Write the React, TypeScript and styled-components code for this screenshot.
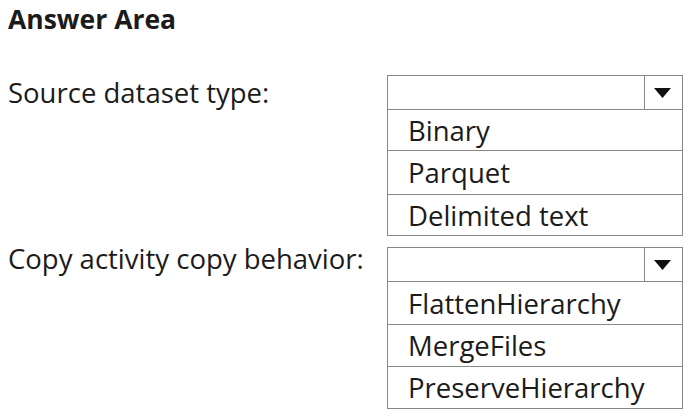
import React from "react";
import styled, { createGlobalStyle } from "styled-components";

const Global = createGlobalStyle`
  html, body {
    margin: 0;
    padding: 0;
    background: #ffffff;
  }
  body {
    font-family: "Open Sans", "Noto Sans", "Liberation Sans", sans-serif;
    color: #1b1b1b;
  }
`;

const Page = styled.div`
  width: 700px;
  height: 419px;
  box-sizing: border-box;
  padding: 3px 0 0 8px;
  overflow: hidden;
`;

const Title = styled.h1`
  margin: 0;
  font-size: 26.5px;
  font-weight: 700;
  line-height: 32px;
  letter-spacing: 0;
`;

const Form = styled.div`
  display: grid;
  grid-template-columns: 379px 296px;
  row-gap: 11px;
  margin-top: 40px;
`;

const Label = styled.div<{ $offset: number }>`
  font-size: 27.5px;
  line-height: 35px;
  margin-top: ${(p) => p.$offset}px;
  white-space: nowrap;
`;

const Field = styled.div`
  display: flex;
  flex-direction: column;
`;

const Select = styled.div`
  display: flex;
  height: 35px;
  box-sizing: border-box;
  border: 1.5px solid #888888;
`;

const SelectValue = styled.div`
  flex: 1;
`;

const ArrowCell = styled.div`
  width: 34px;
  border-left: 1.5px solid #888888;
  display: flex;
  align-items: center;
  justify-content: center;
  padding-right: 3px;
`;

const Option = styled.div<{ $h: number }>`
  height: ${(p) => p.$h}px;
  box-sizing: border-box;
  border: 1.5px solid #888888;
  border-top: none;
  display: flex;
  align-items: center;
  padding-left: 20px;
  font-size: 27.5px;
  white-space: nowrap;
`;

const Arrow = () => (
  <svg width="17" height="10" viewBox="0 0 17 10">
    <path d="M0 0 H17 L8.5 10 Z" fill="#111" />
  </svg>
);

type Dropdown = {
  label: string;
  offset: number;
  options: [string, number][];
};

const rows: Dropdown[] = [
  {
    label: "Source dataset type:",
    offset: 0,
    options: [
      ["Binary", 41],
      ["Parquet", 44],
      ["Delimited text", 41],
    ],
  },
  {
    label: "Copy activity copy behavior:",
    offset: -6,
    options: [
      ["FlattenHierarchy", 43],
      ["MergeFiles", 42],
      ["PreserveHierarchy", 42],
    ],
  },
];

export default function App() {
  return (
    <>
      <Global />
      <Page>
        <Title>Answer Area</Title>
        <Form>
          {rows.map((r) => (
            <React.Fragment key={r.label}>
              <Label $offset={r.offset}>{r.label}</Label>
              <Field>
                <Select>
                  <SelectValue />
                  <ArrowCell>
                    <Arrow />
                  </ArrowCell>
                </Select>
                {r.options.map(([text, h]) => (
                  <Option key={text} $h={h}>
                    {text}
                  </Option>
                ))}
              </Field>
            </React.Fragment>
          ))}
        </Form>
      </Page>
    </>
  );
}
